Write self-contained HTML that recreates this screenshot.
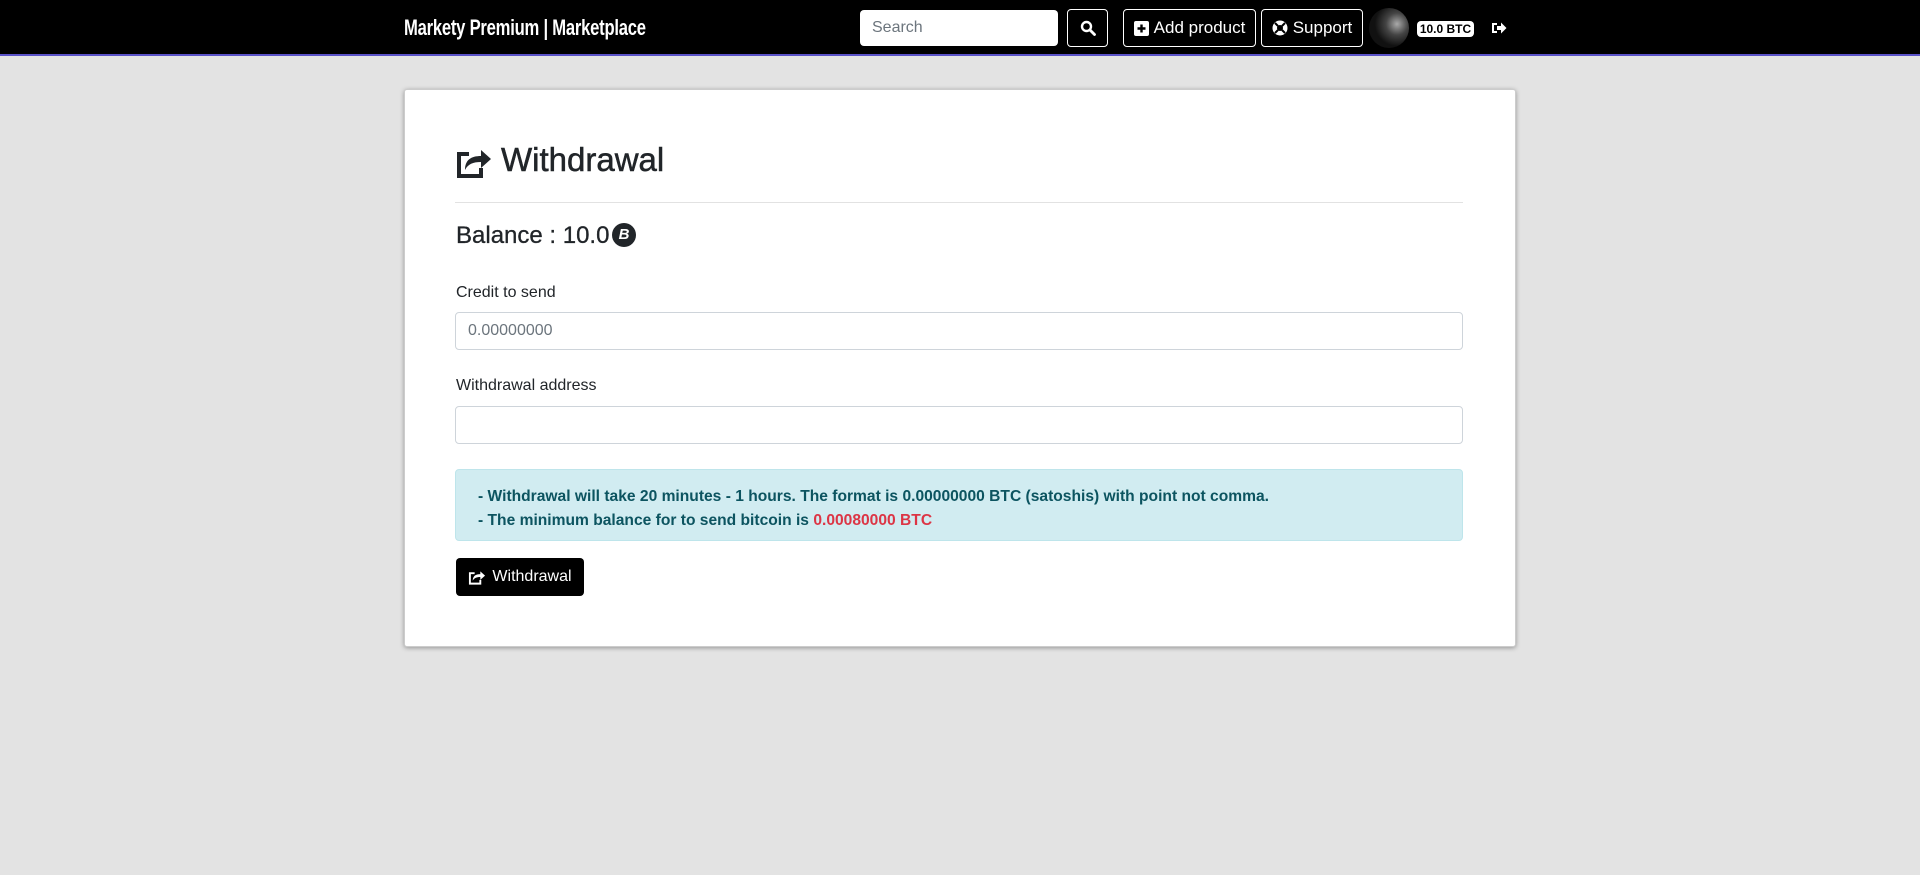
<!DOCTYPE html>
<html><head><meta charset="utf-8"><style>
*{box-sizing:border-box;margin:0;padding:0}
body{width:1920px;height:875px;background:#e3e3e3;font-family:"Liberation Sans",sans-serif;color:#212529;position:relative;overflow:hidden}
.nav{position:absolute;left:0;top:0;width:1920px;height:56px;background:#000;border-bottom:2px solid #5a52c8}
.abs{position:absolute}
.brand{left:404px;top:15px;color:#fff;font-size:22px;font-weight:bold;font-family:"Liberation Sans Narrow","Liberation Sans",sans-serif;transform:scaleX(.755);transform-origin:left;letter-spacing:-.3px;white-space:nowrap}
.search{left:860px;top:10px;width:198px;height:36px;background:#fff;border-radius:4px;color:#6c757d;font-size:16px;padding:9px 12px}
.obtn{border:1px solid #fff;border-radius:4px;color:#fff;font-size:17px;height:38px;top:9px;display:flex;align-items:center;justify-content:center;gap:5px}
.card{left:404px;top:89px;width:1112px;height:558px;background:#fff;border:1px solid #ccc;border-radius:3px;box-shadow:0 1px 5px rgba(0,0,0,.35)}
.inp{left:455px;width:1008px;height:38px;border:1px solid #ced4da;border-radius:4px;font-size:16px;color:#6c757d;padding:9px 12px}
.lbl{left:456px;font-size:16px}
</style></head><body>
<div class="nav"></div>
<div class="abs brand">Markety Premium | Marketplace</div>
<div class="abs search">Search</div>
<div class="abs obtn" style="left:1067px;width:41px"><svg width="16" height="16" viewBox="0 0 16 16"><circle cx="6.5" cy="6.5" r="4.5" stroke="#fff" stroke-width="2.4" fill="none"/><path d="M10 10l4.5 4.5" stroke="#fff" stroke-width="2.8" stroke-linecap="round"/></svg></div>
<div class="abs obtn" style="left:1123px;width:133px"><svg width="15" height="15" viewBox="0 0 15 15"><rect width="15" height="15" rx="2" fill="#fff"/><path d="M7.5 3.5v8M3.5 7.5h8" stroke="#000" stroke-width="2.4"/></svg>Add product</div>
<div class="abs obtn" style="left:1261px;width:102px"><svg width="16" height="16" viewBox="0 0 16 16"><circle cx="8" cy="8" r="7.5" fill="#fff"/><circle cx="8" cy="8" r="3" fill="#000"/><path d="M3 3l3 3M13 3l-3 3M3 13l3-3M13 13l-3-3" stroke="#000" stroke-width="2"/></svg>Support</div>
<div class="abs" style="left:1369px;top:8px;width:40px;height:40px;border-radius:50%;background:radial-gradient(circle at 70% 40%,#aaa,#444 30%,#111 60%)"></div>
<div class="abs" style="left:1417px;top:21px;width:57px;height:16px;background:#fff;border-radius:4px;color:#000;font-size:12px;font-weight:bold;text-align:center;line-height:16px">10.0 BTC</div>
<svg class="abs" style="left:1491px;top:21px" width="16" height="14" viewBox="0 0 16 14"><path d="M1 2h5v2H3v6h3v2H1z" fill="#fff"/><path d="M6 5h4V1.5L15.5 7 10 12.5V9H6z" fill="#fff"/></svg>

<div class="abs card"></div>
<svg class="abs" style="left:455px;top:146px" width="38" height="32" viewBox="0 0 38 32"><path d="M2 6h12v4H6v18h18v-6h4v10H2z" fill="#212529"/><path d="M10 24c0-10 6-14 16-14V4l10 9-10 9v-6c-8 0-13 2-16 8z" fill="#212529"/></svg>
<div class="abs" style="left:501px;top:141px;font-size:33px;-webkit-text-stroke:.5px #212529">Withdrawal</div>
<div class="abs" style="left:455px;top:202px;width:1008px;height:1px;background:#e2e2e2"></div>
<div class="abs" style="left:456px;top:222px;font-size:24px;-webkit-text-stroke:.3px #212529">Balance : 10.0</div>
<div class="abs" style="left:612px;top:223px;width:24px;height:24px;border-radius:50%;background:#212529;color:#fff;font-size:15px;font-weight:bold;text-align:center;line-height:24px;font-style:italic">B</div>
<div class="abs lbl" style="top:284px">Credit to send</div>
<div class="abs inp" style="top:312px">0.00000000</div>
<div class="abs lbl" style="top:377px">Withdrawal address</div>
<div class="abs inp" style="top:406px"></div>
<div class="abs" style="left:455px;top:469px;width:1008px;height:72px;background:#d1ecf1;border:1px solid #bee5eb;border-radius:4px;color:#0c5460;font-weight:bold;font-size:15.6px;padding:15px 0 0 22px;line-height:24px">
- Withdrawal will take 20 minutes - 1 hours. The format is 0.00000000 BTC (satoshis) with point not comma.<br>- The minimum balance for to send bitcoin is <span style="color:#dc3545">0.00080000 BTC</span></div>
<div class="abs" style="left:456px;top:558px;width:128px;height:38px;background:#000;border-radius:4px;color:#fff;font-size:16px;display:flex;align-items:center;justify-content:center;gap:6px"><svg width="18" height="16" viewBox="0 0 38 32"><path d="M2 6h12v4H6v18h18v-6h4v10H2z" fill="#fff"/><path d="M10 24c0-10 6-14 16-14V4l10 9-10 9v-6c-8 0-13 2-16 8z" fill="#fff"/></svg>Withdrawal</div>
</body></html>
